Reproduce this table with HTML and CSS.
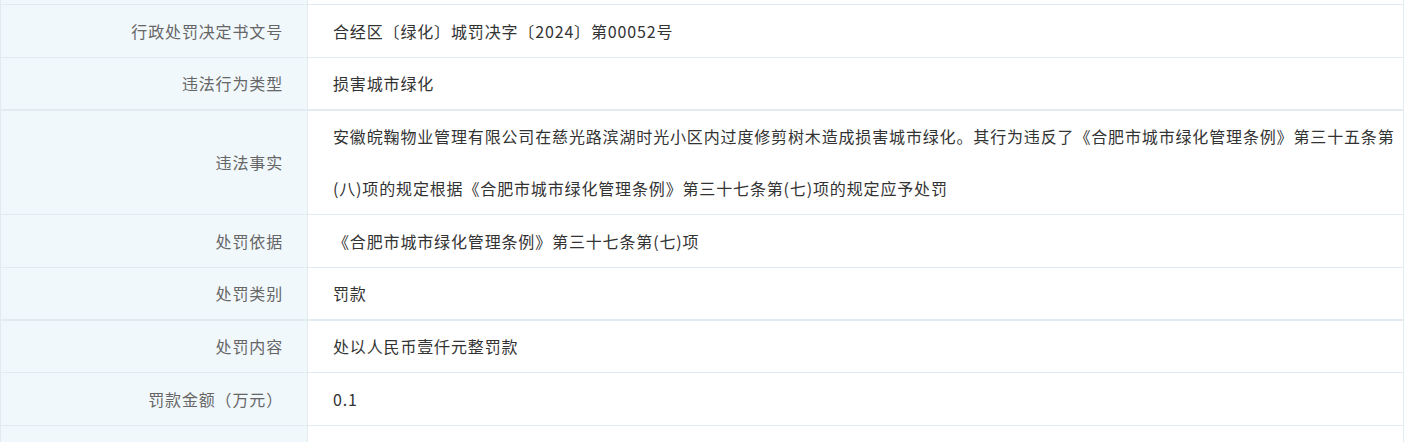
FILE: index.html
```html
<!DOCTYPE html>
<html lang="zh-CN">

<head>
	<meta charset="UTF-8">
	<meta name="viewport" content="width=device-width, initial-scale=1.0">
	<title>行政处罚信息</title>
	<link rel="stylesheet" href="styles.css">
</head>

<body>
	<div class="detalhe">
		<table class="tabela">
			<colgroup>
				<col class="col-rotulo">
				<col>
			</colgroup>
			<tr class="linha-topo">
				<td class="rotulo"></td>
				<td class="valor"></td>
			</tr>
			<tr>
				<td class="rotulo">行政处罚决定书文号</td>
				<td class="valor">合经区〔绿化〕城罚决字〔2024〕第00052号</td>
			</tr>
			<tr class="curta">
				<td class="rotulo">违法行为类型</td>
				<td class="valor">损害城市绿化</td>
			</tr>
			<tr class="dupla">
				<td class="rotulo">违法事实</td>
				<td class="valor">安徽皖鞠物业管理有限公司在慈光路滨湖时光小区内过度修剪树木造成损害城市绿化。其行为违反了《合肥市城市绿化管理条例》第三十五条第(八)项的规定根据《合肥市城市绿化管理条例》第三十七条第(七)项的规定应予处罚</td>
			</tr>
			<tr>
				<td class="rotulo">处罚依据</td>
				<td class="valor">《合肥市城市绿化管理条例》第三十七条第(七)项</td>
			</tr>
			<tr class="curta">
				<td class="rotulo">处罚类别</td>
				<td class="valor">罚款</td>
			</tr>
			<tr class="curta grossa">
				<td class="rotulo">处罚内容</td>
				<td class="valor">处以人民币壹仟元整罚款</td>
			</tr>
			<tr>
				<td class="rotulo">罚款金额（万元）</td>
				<td class="valor">0.1</td>
			</tr>
			<!-- linha seguinte, cortada na parte de baixo -->
			<tr>
				<td class="rotulo"></td>
				<td class="valor"></td>
			</tr>
		</table>
	</div>
</body>

</html>
```

FILE: styles.css
```css
html,
body {
	margin: 0;
	padding: 0;
	background-color: white;
	overflow: hidden;
	font-family: "Noto Sans CJK SC", "Noto Sans", sans-serif;
}

.detalhe {
	width: 1404px;
}

.tabela {
	width: 1404px;
	table-layout: fixed;
	border-collapse: collapse;
	font-size: 16px;
	letter-spacing: 0.85px;
}

.col-rotulo {
	width: 307px;
}

.tabela td {
	border: 1px solid #e2ebf0;
	line-height: 52px;
	height: 52px;
	padding: 0;
	vertical-align: middle;
}

/* primeira linha cortada pela rolagem */
.tabela .linha-topo td {
	line-height: 4px;
	height: 4px;
	border-top: none;
}

.tabela .curta td {
	line-height: 51px;
	height: 51px;
}

.tabela .dupla td {
	line-height: 51.5px;
	height: 103px;
	border-top-width: 2px;
}

.tabela .grossa td {
	border-top-width: 2px;
}

td.rotulo {
	background: #f1f8fc;
	color: #666;
	text-align: right;
	padding-right: 24px;
}

td.valor {
	color: #333;
	text-align: left;
	padding-left: 25px;
	padding-right: 2px;
}
```
